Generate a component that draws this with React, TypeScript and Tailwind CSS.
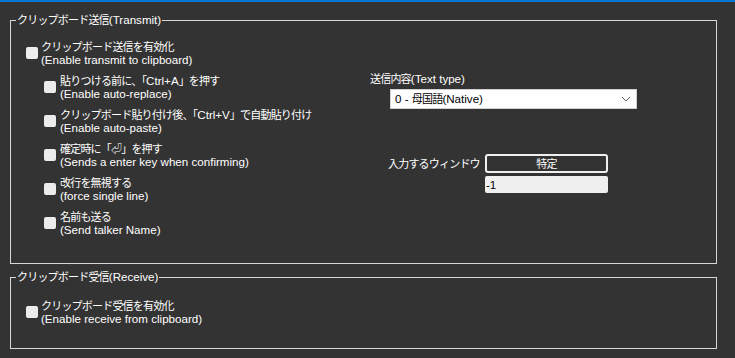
function J({ children }: { children: React.ReactNode }) {
  return <span className="text-[11px] tracking-[-0.8px]">{children}</span>;
}

function Check({ jp, en }: { jp: React.ReactNode; en: string }) {
  return (
    <div className="flex items-center gap-[3px]">
      <span className="w-[12px] h-[12px] rounded-[2px] bg-[#ececec] shrink-0" />
      <div className="leading-[13px] whitespace-nowrap">
        <div className="h-[13px]">{jp}</div>
        <div className="h-[13px]">{en}</div>
      </div>
    </div>
  );
}

const subItems = [
  { jp: <><J>貼りつける前に、「</J>Ctrl+A<J>」を押す</J></>, en: "(Enable auto-replace)" },
  { jp: <><J>クリップボード貼り付け後、「</J>Ctrl+V<J>」で自動貼り付け</J></>, en: "(Enable auto-paste)" },
  { jp: <J>確定時に「⏎」を押す</J>, en: "(Sends a enter key when confirming)" },
  { jp: <J>改行を無視する</J>, en: "(force single line)" },
  { jp: <J>名前も送る</J>, en: "(Send talker Name)" },
];

export default function App() {
  return (
    <div className="w-[735px] h-[358px] bg-[#333333] text-white text-[11.6px] font-['Liberation_Sans','Noto_Sans_CJK_JP',sans-serif] overflow-hidden">
      <div className="h-[2px] bg-[#0078d4]" />
      <div className="pt-[11px]">
        {/* 送信 group */}
        <fieldset className="border border-[#d6d6d6] h-[251px] mx-[10px] w-[707px]">
          <legend className="ml-[5px] px-[1px] h-[14px] leading-[14px]">
            <J>クリップボード送信</J>(Transmit)
          </legend>
          <div className="flex">
            <div className="w-[359px] pl-[15px] pt-[13px] flex flex-col gap-[8px]">
              <Check jp={<J>クリップボード送信を有効化</J>} en="(Enable transmit to clipboard)" />
              <div className="pl-[18px] flex flex-col gap-[8px]">
                {subItems.map((item, i) => (
                  <div key={i} className="[&>div]:gap-[4px]">
                    <Check jp={item.jp} en={item.en} />
                  </div>
                ))}
              </div>
            </div>
            <div className="pt-[45px] flex flex-col">
              <div className="h-[14px] leading-[14px] whitespace-nowrap">
                <J>送信内容</J>(Text type)
              </div>
              <div className="mt-[3px] ml-[20px] w-[247px] h-[20px] bg-white border border-[#d0d0d0] text-black flex items-center justify-between pl-[4px] pr-[5px] leading-[14px]">
                <span className="h-[14px]">
                  0 - <J>母国語</J>(Native)
                </span>
                <svg width="10" height="6" viewBox="0 0 10 6" fill="none">
                  <polyline points="1,1 5,5 9,1" stroke="#606060" strokeWidth="1" />
                </svg>
              </div>
              <div className="mt-[45px] ml-[18px] flex items-center">
                <span className="w-[97px] h-[14px] shrink-0 leading-[14px] whitespace-nowrap">
                  <J>入力するウィンドウ</J>
                </span>
                <div className="w-[123px] h-[19px] border-2 border-[#f0f0f0] rounded-[3px] flex items-center justify-center leading-[14px]">
                  <J>特定</J>
                </div>
              </div>
              <div className="mt-[3px] ml-[115px] w-[123px] h-[17px] bg-[#f0f0f0] rounded-[2px] text-black flex items-center pl-[1px] leading-[14px]">
                -1
              </div>
            </div>
          </div>
        </fieldset>

        {/* 受信 group */}
        <fieldset className="border border-[#d6d6d6] h-[79px] mx-[10px] w-[707px] mt-[6px]">
          <legend className="ml-[5px] px-[1px] h-[14px] leading-[14px]">
            <J>クリップボード受信</J>(Receive)
          </legend>
          <div className="pl-[15px] pt-[15px]">
            <Check jp={<J>クリップボード受信を有効化</J>} en="(Enable receive from clipboard)" />
          </div>
        </fieldset>
      </div>
    </div>
  );
}
